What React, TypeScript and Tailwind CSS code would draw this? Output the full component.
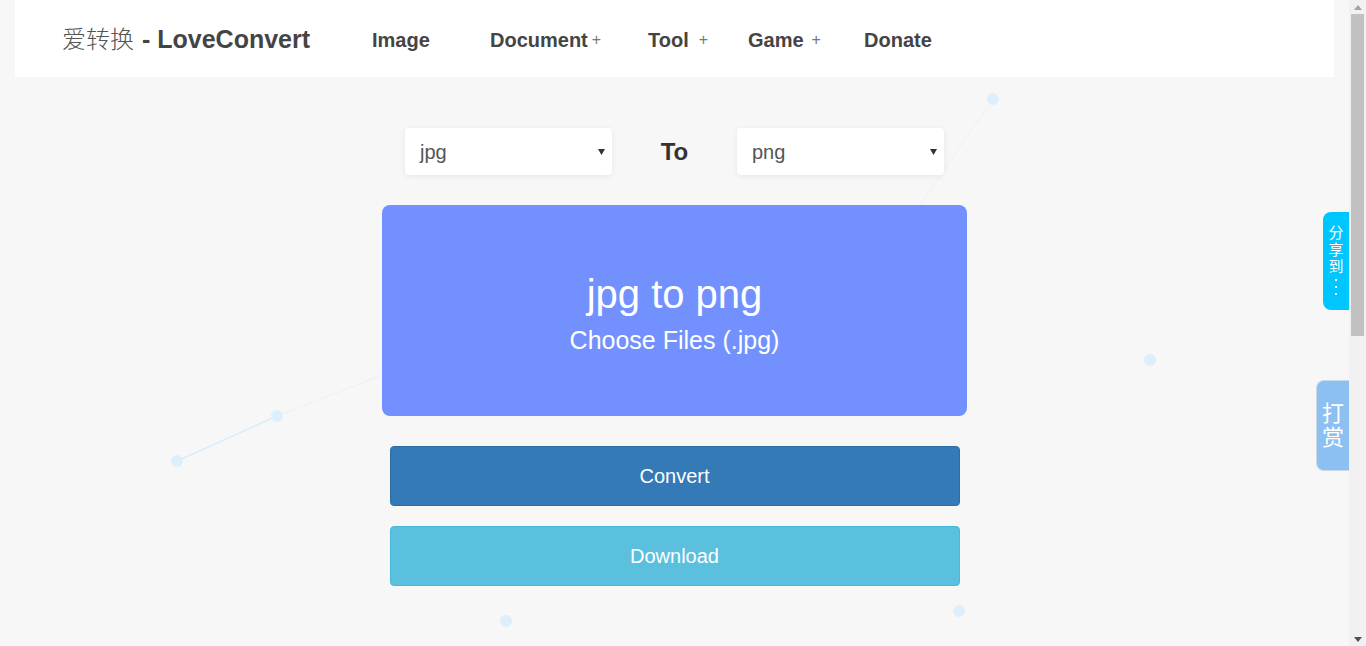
const navItems = [
    { label: 'Image', plus: false, w: 'w-[118px]', gap: '' },
    { label: 'Document', plus: true, w: 'w-[158px]', gap: 'ml-[4px]' },
    { label: 'Tool', plus: true, w: 'w-[100px]', gap: 'ml-[10px]' },
    { label: 'Game', plus: true, w: 'w-[116px]', gap: 'ml-[8px]' },
    { label: 'Donate', plus: false, w: 'w-[90px]', gap: '' },
];

const Particles = () => (
    <svg className="absolute inset-0 pointer-events-none" width="1349" height="646">
        <line x1="177" y1="461" x2="277" y2="416" stroke="#d9ecfa" strokeWidth="1.5" />
        <line x1="277" y1="416" x2="385" y2="374" stroke="#e8f2fa" strokeWidth="1.2" />
        <line x1="993" y1="99" x2="915" y2="212" stroke="#edf3f7" strokeWidth="1.2" />
        {[
            [993, 99],
            [1150, 360],
            [277, 416],
            [177, 461],
            [506, 621],
            [959, 611],
        ].map(([x, y]) => (
            <circle key={`${x}-${y}`} cx={x} cy={y} r="6" fill="#ddeffb" />
        ))}
    </svg>
);

const Select = ({ value }: { value: string }) => (
    <div className="w-[207px] h-[47px] bg-white rounded-[4px] shadow-[0_1px_6px_rgba(0,0,0,0.07)] flex items-center justify-between pl-[15px] pr-[7px]">
        <span className="text-[20px] text-[#555]">{value}</span>
        <svg width="7" height="6" viewBox="0 0 7 6">
            <path d="M0 0 H7 L3.5 6 Z" fill="#333" />
        </svg>
    </div>
);

const Scrollbar = () => (
    <div className="w-[17px] h-full bg-[#f1f1f1] flex flex-col items-center">
        <div className="h-[14px] flex items-center justify-center">
            <svg width="8" height="5" viewBox="0 0 8 5">
                <path d="M0 5 L4 0 L8 5 Z" fill="#a3a3a3" />
            </svg>
        </div>
        <div className="w-[13px] h-[322px] bg-[#c1c1c1]" />
        <div className="flex-1" />
        <div className="h-[14px] flex items-center justify-center">
            <svg width="8" height="5" viewBox="0 0 8 5">
                <path d="M0 0 L8 0 L4 5 Z" fill="#505050" />
            </svg>
        </div>
    </div>
);

export default function App() {
    return (
        <div className="flex h-[646px] w-full overflow-hidden font-['Liberation_Sans','Noto_Sans_CJK_SC',sans-serif]">
            <main className="relative flex-1 h-full bg-[#f7f7f7] px-[15px]">
                <Particles />

                {/* Header */}
                <header className="relative z-10 h-[77px] bg-white flex items-center pl-[47px] pt-[2px]">
                    <div className="w-[310px] flex items-baseline text-[25px] text-[#444]">
                        <span className="font-['Noto_Sans_CJK_SC',serif] font-light text-[#555] text-[24px]">爱转换</span>
                        <span className="font-bold ml-[8px]">- LoveConvert</span>
                    </div>
                    <nav className="flex items-center">
                        {navItems.map((item) => (
                            <div key={item.label} className={`${item.w} flex items-center`}>
                                <span className="text-[20px] font-bold text-[#444]">{item.label}</span>
                                {item.plus && (
                                    <span className={`${item.gap} text-[16px] text-[#777]`}>+</span>
                                )}
                            </div>
                        ))}
                    </nav>
                </header>

                {/* Converter */}
                <section className="relative z-10 flex flex-col items-center">
                    <div className="mt-[51px] flex items-center">
                        <Select value="jpg" />
                        <div className="w-[125px] text-center text-[24px] font-bold text-[#333]">To</div>
                        <Select value="png" />
                    </div>

                    <div className="mt-[30px] w-[585px] h-[211px] rounded-[8px] bg-[#7391fe] flex flex-col items-center pt-[66px] gap-[8px] text-white">
                        <div className="text-[40px] leading-[46px]">jpg to png</div>
                        <div className="text-[25px] leading-[30px]">Choose Files (.jpg)</div>
                    </div>

                    <button className="mt-[30px] w-[570px] h-[60px] rounded-[4px] bg-[#337ab7] border border-[#2e6da4] text-white text-[20px]">
                        Convert
                    </button>
                    <button className="mt-[20px] w-[570px] h-[60px] rounded-[4px] bg-[#5bc0de] border border-[#46b8da] text-white text-[20px]">
                        Download
                    </button>
                </section>

                {/* Side tabs */}
                <div className="absolute right-0 top-[212px] z-20 w-[26px] h-[98px] bg-[#00c6ff] rounded-l-[8px] flex flex-col items-center pt-[12px] text-white text-[15px] leading-[17px]">
                    <span>分</span>
                    <span>享</span>
                    <span>到</span>
                    <span className="flex flex-col items-center gap-[5px] mt-[4px]">
                        <span className="w-[2px] h-[2px] bg-white" />
                        <span className="w-[2px] h-[2px] bg-white" />
                        <span className="w-[2px] h-[2px] bg-white" />
                    </span>
                </div>
                <div className="absolute right-0 top-[380px] z-20 w-[33px] h-[91px] bg-[#8cc0f2] border border-r-0 border-[#c9d9e8] rounded-l-[8px] flex flex-col items-center justify-center text-white text-[22px] leading-[24px]">
                    <span>打</span>
                    <span>赏</span>
                </div>
            </main>
            <Scrollbar />
        </div>
    );
}
